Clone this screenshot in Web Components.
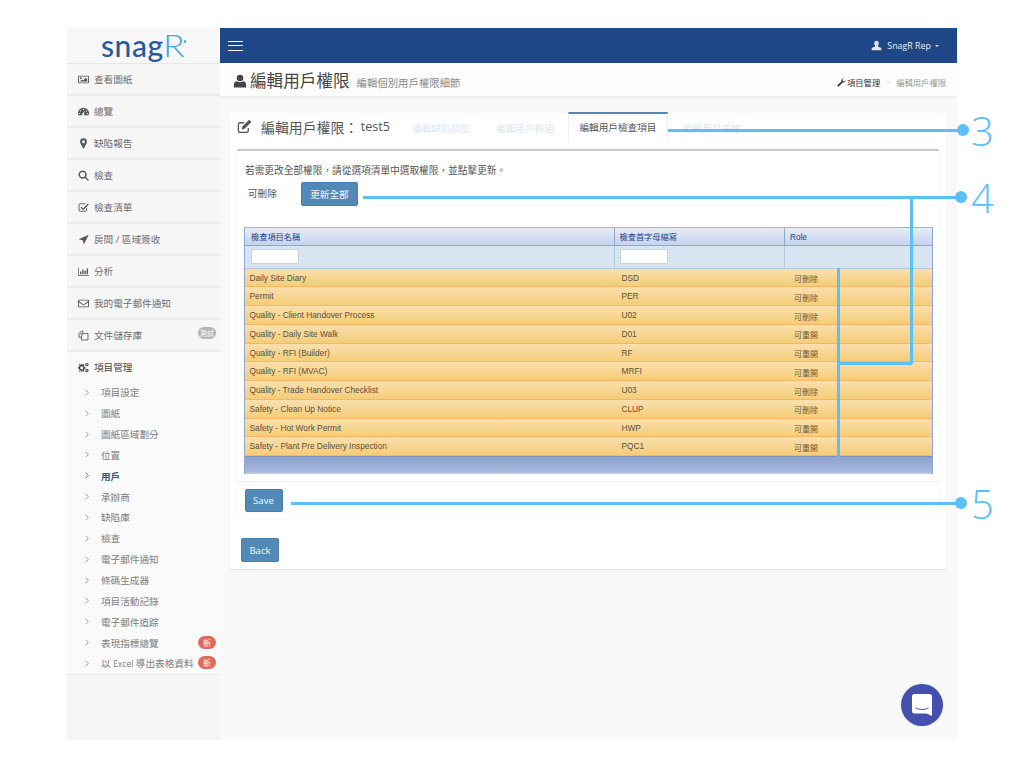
<!DOCTYPE html>
<html lang="zh-Hant">
<head>
<meta charset="utf-8">
<title>編輯用戶權限</title>
<style>
html,body{margin:0;padding:0;background:#fff}
body{font-family:"Open Sans","Noto Sans CJK TC",sans-serif;color:#555;padding:28px 0 0 67px;width:1024px;height:768px;box-sizing:border-box;overflow:hidden;position:relative}
</style>
</head>
<body>
<snag-app>
  <snag-sidebar slot="side">
    <nav-item icon="picture">查看圖紙</nav-item>
    <nav-item icon="gauge">總覽</nav-item>
    <nav-item icon="pin">缺陷報告</nav-item>
    <nav-item icon="search">檢查</nav-item>
    <nav-item icon="check">檢查清單</nav-item>
    <nav-item icon="arrow">房間 / 區域簽收</nav-item>
    <nav-item icon="chart">分析</nav-item>
    <nav-item icon="mail">我的電子郵件通知</nav-item>
    <nav-item icon="files" badge="測試" tone="gray">文件儲存庫</nav-item>
    <nav-group label="項目管理">
      <sub-item>項目設定</sub-item>
      <sub-item>圖紙</sub-item>
      <sub-item>圖紙區域劃分</sub-item>
      <sub-item>位置</sub-item>
      <sub-item active>用戶</sub-item>
      <sub-item>承辦商</sub-item>
      <sub-item>缺陷庫</sub-item>
      <sub-item>檢查</sub-item>
      <sub-item>電子郵件通知</sub-item>
      <sub-item>條碼生成器</sub-item>
      <sub-item>項目活動記錄</sub-item>
      <sub-item>電子郵件追踪</sub-item>
      <sub-item badge="新">表現指標總覽</sub-item>
      <sub-item badge="新">以 <span style="font-size:8.500px">Excel</span> 導出表格資料</sub-item>
    </nav-group>
  </snag-sidebar>
  <top-bar slot="main"></top-bar>
  <page-header slot="main"></page-header>
  <content-area slot="main">
    <perm-card>
      <check-row name="Daily Site Diary" code="DSD" role="可刪除"></check-row>
      <check-row name="Permit" code="PER" role="可刪除"></check-row>
      <check-row name="Quality - Client Handover Process" code="U02" role="可刪除"></check-row>
      <check-row name="Quality - Daily Site Walk" code="D01" role="可重開"></check-row>
      <check-row name="Quality - RFI (Builder)" code="RF" role="可重開"></check-row>
      <check-row name="Quality - RFI (MVAC)" code="MRFI" role="可重開"></check-row>
      <check-row name="Quality - Trade Handover Checklist" code="U03" role="可刪除"></check-row>
      <check-row name="Safety - Clean Up Notice" code="CLUP" role="可刪除"></check-row>
      <check-row name="Safety - Hot Work Permit" code="HWP" role="可重開"></check-row>
      <check-row name="Safety - Plant Pre Delivery Inspection" code="PQC1" role="可重開"></check-row>
    </perm-card>
  </content-area>
</snag-app>
<call-outs></call-outs>
<chat-launcher></chat-launcher>
<script>
const ICONS={
 picture:'<path fill-rule="evenodd" d="M1 2.5h14a1 1 0 0 1 1 1v9a1 1 0 0 1-1 1H1a1 1 0 0 1-1-1v-9a1 1 0 0 1 1-1zm.3 1.3v8.4h13.4V3.8z"/><circle cx="4.2" cy="6" r="1.4"/><path d="M2.7 11l3.2-3 1.6 1.4 3.6-3.9 2.3 2.5V11z"/>',
 gauge:'<path fill-rule="evenodd" d="M8 2.5a8 8 0 0 1 8 8c0 1.3-.3 2.3-.8 3H.8c-.5-.7-.8-1.700-.8-3a8 8 0 0 1 8-8zM8 4a1 1 0 1 0 0 2 1 1 0 0 0 0-2zM3.500 6a1 1 0 1 0 0 2 1 1 0 0 0 0-2zm9 0a1 1 0 1 0 0 2 1 1 0 0 0 0-2zM2.300 10a1 1 0 1 0 0 2 1 1 0 0 0 0-2zm11.400 0a1 1 0 1 0 0 2 1 1 0 0 0 0-2zM10 6.500l-2.700 3.700a1.600 1.600 0 1 0 1.500.6z"/>',
 pin:'<path fill-rule="evenodd" d="M8 .5a5 5 0 0 1 5 5c0 1.200-.4 2-.9 3L8.700 14.900a.8.8 0 0 1-1.400 0L3.900 8.500C3.400 7.500 3 6.700 3 5.500a5 5 0 0 1 5-5zm0 2.800a2.200 2.200 0 1 0 0 4.400 2.200 2.200 0 0 0 0-4.400z"/>',
 search:'<path fill-rule="evenodd" d="M6.700 .8a5.900 5.900 0 0 1 4.800 9.300l3.900 3.900a1 1 0 0 1-1.400 1.400l-3.900-3.900A5.900 5.900 0 1 1 6.700 .8zm0 2a3.900 3.900 0 1 0 0 7.800 3.900 3.900 0 0 0 0-7.800z"/>',
 check:'<path d="M12.500 8.800v3a1.700 1.700 0 0 1-1.700 1.700H3.200a1.700 1.700 0 0 1-1.700-1.700V4.200a1.700 1.700 0 0 1 1.700-1.700h7.300" fill="none" stroke="currentColor" stroke-width="1.300"/><path d="M4.800 6.800l2.600 2.500 7-7 1.300 1.300-8.300 8.300-3.900-3.800z"/>',
 arrow:'<path d="M15.500 1L8.500 15.200 7 9 .8 7.500z"/>',
 chart:'<path d="M0 2h1v11h15v1H0z"/><path d="M3 8h2v4H3zM6.200 5h2v7h-2zM9.400 7h2v5h-2zM12.600 3.500h2V12h-2z"/>',
 mail:'<path fill-rule="evenodd" d="M1.300 2.500h13.400A1.300 1.300 0 0 1 16 3.800v8.400a1.300 1.300 0 0 1-1.300 1.300H1.300A1.300 1.300 0 0 1 0 12.200V3.800a1.300 1.300 0 0 1 1.300-1.300zm0 1.200v.8L8 9.300l6.700-4.800v-.8zm0 2.300v6.300h13.400V6L8 10.800z"/>',
 files:'<path d="M7 1.500H5L1.500 5v5.500h3.300M7 1.500v4H3" fill="none" stroke="currentColor" stroke-width="1.300"/><path d="M10.800 5H8.500L5 8.500v6h9.500V5z" fill="none" stroke="currentColor" stroke-width="1.300"/>',
 cogs:'<circle cx="5.500" cy="8.500" r="3.400" fill="none" stroke="currentColor" stroke-width="2"/><path d="M4.700 3h1.600l.2 2H4.500zM4.700 14h1.600l.2-2H4.500zM0 7.700v1.600l2 .2V7.500zM11 7.700v1.600l-2 .2V7.500zM1.500 3.400l1.200-1 1.200 1.700-1.300 1zM9.500 13.600l-1.200 1-1.200-1.700 1.300-1zM1.500 13.600l1.200 1 1.200-1.700-1.300-1zM9.500 3.400l-1.200-1-1.200 1.700 1.300 1z"/><circle cx="13" cy="3.800" r="1.700" fill="none" stroke="currentColor" stroke-width="1.500"/><circle cx="13" cy="12.300" r="1.700" fill="none" stroke="currentColor" stroke-width="1.500"/>',
 user:'<circle cx="8" cy="4.600" r="3.800"/><path d="M1 15.500v-3.200c0-2.300 1.700-4 3.500-4 1 .8 2.200 1.200 3.500 1.200s2.500-.4 3.500-1.200c1.800 0 3.500 1.700 3.500 4v3.200z"/>',
 userthin:'<path d="M8 1c2 0 3.400 1.600 3.400 3.600 0 1.300-.5 2.500-1.300 3.300v1.500l4.900 2.400V15H1v-3.200l4.900-2.400V7.900C5.100 7.100 4.600 5.900 4.600 4.600 4.600 2.600 6 1 8 1z"/>',
 edit:'<path d="M12 9.500v3a1.800 1.800 0 0 1-1.800 1.800H3.300a1.800 1.800 0 0 1-1.800-1.800V5.800A1.800 1.800 0 0 1 3.300 4h4.400" fill="none" stroke="currentColor" stroke-width="1.400"/><path d="M13 .8l2.400 2.400-7.300 7.300-3 .6.600-3z"/>',
 wrench:'<path d="M15.700 3.800a4.300 4.300 0 0 1-5.700 4.100L4 14.400a1.800 1.800 0 0 1-2.600-2.500L8 6A4.300 4.300 0 0 1 12.300.3L9.800 2.800l.5 2.600 2.700.6z"/>'
};
const svg=(n,s)=>`<svg viewBox="0 0 16 16" width="${s}" height="${s}" fill="currentColor" aria-hidden="true">${ICONS[n]}</svg>`;
function def(tag,html){
  customElements.define(tag,class extends HTMLElement{
    constructor(){super();this.attachShadow({mode:'open'});}
    connectedCallback(){
      if(this._done)return;this._done=1;
      this.shadowRoot.innerHTML=typeof html==='function'?html(this):html;
    }
  });
}
const CJK='"Open Sans","Noto Sans CJK TC",sans-serif';

def('snag-app',`<style>
:host{display:grid;grid-template-columns:153px 737px;width:890px;height:712px;background:#f9f9f9;font-family:${CJK}}
.m{display:flex;flex-direction:column;min-width:0;height:712px}
</style><slot name="side"></slot><div class="m"><slot name="main"></slot></div>`);

def('snag-sidebar',`<style>
:host{display:flex;flex-direction:column;background:#f5f5f5;height:712px}
.logo{height:35px;border-bottom:1px solid #e6e6e6;display:flex;align-items:center;justify-content:center;background:#f7f7f7;font:500 30px/35px Lato,"Open Sans",sans-serif;letter-spacing:.6px;color:#2a5a9b}
.logo b{display:inline-block;font-weight:300;font-size:31px;color:#45a9df;letter-spacing:0;margin:0 3px 0 -1px;transform:scaleX(1.15);transform-origin:left center}
.logo i{display:inline-block;width:2.500px;height:2.500px;border-radius:50%;background:#45a9df;margin:0 0 8px -1px}
</style><div class="logo"><span>snag</span><b>R</b><i></i></div><slot></slot>`);

def('nav-item',h=>`<style>
:host{display:flex;align-items:center;height:30px;border-bottom:2px solid #ebebeb;padding-left:11px;font-size:9.650px;color:#6e6e6e;position:relative;background:#f6f6f6}
.i{width:11px;height:11px;display:flex;align-items:center;justify-content:center;margin-right:5px;color:#555;flex:none}
.b{position:absolute;right:4px;top:7px;height:12px;width:18px;border-radius:7px;background:#b3b3b3;color:#fff;font-size:7.200px;line-height:12px;text-align:center}
</style><span class="i">${svg(h.getAttribute('icon'),11)}</span><slot></slot>${h.getAttribute('badge')?`<span class="b">${h.getAttribute('badge')}</span>`:''}`);

def('nav-group',h=>`<style>
:host{display:block;background:#fafafa;border-bottom:1px solid #e8e8e8}
.h{height:30px;box-sizing:border-box;padding:0 0 0 11px;display:flex;align-items:center;font-size:9.650px;color:#444}
.i{width:11px;height:11px;display:flex;margin-right:5px;color:#444}
</style><div class="h"><span class="i">${svg('cogs',11)}</span>${h.getAttribute('label')}</div><slot></slot>`);

def('sub-item',h=>{const a=h.hasAttribute('active');return `<style>
:host{display:flex;align-items:center;height:20.850px;padding-left:18px;font-size:9.650px;color:${a?'#2a5a9b':'#808080'};font-weight:${a?700:400};position:relative;white-space:pre}
svg{flex:none;width:4px;height:7px;margin-right:12px}
.b{position:absolute;right:4px;top:3.500px;height:13px;width:18px;border-radius:7px;background:#e2695a;color:#fff;font-size:8px;line-height:13px;text-align:center}
</style><svg viewBox="0 0 4 7"><path d="M.5 .7L3.300 3.500.5 6.300" fill="none" stroke="${a?'#2a5a9b':'#888'}" stroke-width=".8"/></svg><span><slot></slot></span>${h.getAttribute('badge')?`<span class="b">${h.getAttribute('badge')}</span>`:''}`});

def('top-bar',`<style>
:host{display:flex;align-items:center;height:35px;background:#1f4788;color:#e8edf5;padding:0 18px 0 8px;flex:none;font-size:8.900px}
.b{width:15px;height:10px;border-top:1.500px solid #fff;border-bottom:1.500px solid #fff;position:relative;box-sizing:border-box;margin-top:1px}
.b:after{content:"";position:absolute;left:0;right:0;top:2.750px;height:1.500px;background:#fff}
.sp{flex:1}.u{display:flex;color:#dfe6f2;margin-right:5px}
.c{width:0;height:0;border:2.500px solid transparent;border-top-color:#dfe6f2;border-bottom:0;margin-left:4px}
</style><div class="b"></div><div class="sp"></div><span class="u">${svg('userthin',11)}</span><span>SnagR Rep</span><span class="c"></span>`);

def('page-header',`<style>
:host{display:flex;align-items:center;height:33px;box-sizing:content-box;background:#fdfdfd;border-bottom:2px solid #eeeeee;padding:0 11px 0 13px;flex:none;color:#555}
.i{display:flex;color:#444;margin:3px 3px 0 0}
h1{margin:4px 0 0;font-size:16.600px;font-weight:400;color:#444;line-height:1}
small{font-size:10.400px;color:#8a8a8a;margin-left:7px;margin-top:6px}
.sp{flex:1}
.bc{display:flex;align-items:center;font-size:8.300px;color:#999;margin-top:5px}
.bc b{font-weight:400;color:#333;margin-left:1px}.bc i{font-style:normal;margin:0 6px;color:#ccc;font-size:7px}
.w{display:flex;color:#333}
</style><span class="i">${svg('user',14)}</span><h1>編輯用戶權限</h1><small>編輯個別用戶權限細節</small><span class="sp"></span>
<span class="bc"><span class="w">${svg('wrench',9)}</span><b>項目管理</b><i>&gt;</i><span>編輯用戶權限</span></span>`);

def('content-area',`<style>
:host{display:block;flex:1;background:#f9f9f9;padding:15px 11px 0 10px}
</style><slot></slot>`);

def('action-btn',`<style>
:host{display:flex;align-items:center;justify-content:center;background:#5189b7;border:1px solid #4a7fad;border-radius:2px;color:#f3f7fb;font-size:9.650px;box-sizing:border-box;height:var(--h,23px);width:var(--w,auto)}
</style><slot></slot>`);

def('perm-card',`<style>
:host{display:block;height:456px;background:#fff;box-shadow:0 1px 1px #e6e6e6;box-sizing:border-box;color:#555}
.head{display:flex;height:29px;align-items:stretch}
.title{display:flex;align-items:center;width:170px;padding:0 0 2px 7px;box-sizing:border-box;font-size:13.900px;color:#555;white-space:pre}
.title .i{display:flex;margin-right:9px;color:#555}
.title em{font-style:normal;font-size:12.500px;margin-left:-1px}
.tab{display:flex;align-items:center;justify-content:center;width:82px;margin-right:2px;font-size:9.650px;color:#dde8f3;box-sizing:border-box}
.tab.on{width:100px;border-top:2px solid #4f87b5;border-left:1px solid #f0f0f0;border-right:1px solid #f0f0f0;color:#555;height:31px;margin-top:-1px;background:#fff;padding-bottom:4px}
.tab.l{justify-content:flex-start;padding-left:13px;width:90px}
.panel{margin:7px 7px 0;height:370px;border-top:2px solid #c8c8c8;border-radius:2px;box-shadow:0 0 2px #e4e4e4;box-sizing:border-box;padding:0 7px;display:flex;flex-direction:column}
.hint{font-size:9.680px;line-height:13px;margin:12.500px 0 0 1px;white-space:nowrap;color:#555}
.upd{display:flex;align-items:center;margin-top:5.500px;height:24px;padding-left:4px}
.upd span{width:53px;font-size:9.650px;margin-top:-3px}
.sep{display:flex;margin:7px -7px 0;border-top:1px solid #f0f0f0;padding:7px 0 0 7.500px}
.back{display:flex;padding:19px 0 0 11px}
</style>
<div class="head">
 <div class="title"><span class="i">${svg('edit',15)}</span>編輯用戶權限： <em>test5</em></div>
 <div class="tab">編輯缺陷類型</div><div class="tab">編輯用戶群組</div><div class="tab on">編輯用戶檢查項目</div><div class="tab l">編輯用戶表格</div>
</div>
<div class="panel">
 <div class="hint">若需更改全部權限，請從選項清單中選取權限，並點擊更新。</div>
 <div class="upd"><span>可刪除</span><action-btn style="--w:57px;--h:24px">更新全部</action-btn></div>
 <check-table style="margin-top:21px"><slot></slot></check-table>
 <div class="sep"><action-btn style="--w:38px">Save</action-btn></div>
</div>
<div class="back"><action-btn style="--w:38px;--h:24px">Back</action-btn></div>`);

const COLS='grid-template-columns:370px 170px 1fr;';
def('check-table',`<style>
:host{display:block;border:1px solid #8fa6d3;border-bottom:0;border-top-color:#a0b4da;font-family:"Liberation Sans",Arial,"Noto Sans CJK TC",sans-serif;box-sizing:border-box;width:689px}
.r{display:grid;${COLS}}
.hd{height:17px;background:linear-gradient(#e6edf8,#c5d3eb);border-bottom:1px solid #8fa6d3;color:#15428b;font-size:8.200px;line-height:19px}
.hd div{padding-left:6px;border-right:1px solid #8fa6d3}.hd div:nth-child(2){padding-left:4.500px}.hd div:last-child{border:0;padding-left:5px}
.ft{height:22.500px;background:#d9e4f2;border-bottom:1px solid #b4c5de;box-sizing:border-box}
.ft div{border-right:1px solid #b7c7e0;padding:2.500px 0 0 6px}.ft div:nth-child(2){padding-left:4.500px}.ft div:last-child{border:0}
input{display:block;width:48px;height:15px;box-sizing:border-box;border:1px solid #c8d4e6;background:#fff;padding:0;margin:0;border-radius:1px}
.foot{height:18px;background:linear-gradient(#8ea4cf,#a6b8db 85%,#c6d1e6);border-top:1px solid #7b93c3;box-sizing:border-box}
</style>
<div class="r hd"><div>檢查項目名稱</div><div>檢查首字母縮寫</div><div>Role</div></div>
<div class="r ft"><div><input aria-label="檢查項目名稱"></div><div><input aria-label="檢查首字母縮寫"></div><div></div></div>
<slot></slot><div class="foot"></div>`);

def('check-row',h=>`<style>
:host{display:grid;${COLS}height:18.780px;box-sizing:border-box;background:linear-gradient(#fadfae,#f5cd78);border-bottom:1px solid #f3b865;color:#5a5040;font-size:8.300px;line-height:18px;font-family:"Liberation Sans",Arial,sans-serif}
div{padding-left:6.500px;white-space:nowrap}
div:nth-child(2){padding-left:4.500px}
.ro{font-family:"Noto Sans CJK TC",sans-serif;font-size:8px;padding-left:9px;padding-top:1.500px;color:#6f5a38}
</style><div>${h.getAttribute('name')}</div><div>${h.getAttribute('code')}</div><div class="ro">${h.getAttribute('role')}</div>`);

def('call-outs',`<style>
:host{position:absolute;left:0;top:0;width:1024px;height:768px;pointer-events:none;color:#5bc0f8}
.l{position:absolute;background:#5bc0f8}
.d{position:absolute;width:12px;height:12px;border-radius:50%;background:#5bc0f8}
.n{position:absolute;font:300 40px/40px "Open Sans",sans-serif;color:#5bc0f8}
</style>
<div class="l" style="left:668px;top:129px;width:295px;height:3px"></div><div class="d" style="left:957px;top:124px"></div><div class="n" style="left:971px;top:111px">3</div>
<div class="l" style="left:363px;top:195.500px;width:598px;height:3px"></div><div class="d" style="left:955px;top:191px"></div><div class="n" style="left:971px;top:178px">4</div>
<div class="l" style="left:909.500px;top:196px;width:3px;height:168px"></div>
<div class="l" style="left:838px;top:362px;width:74px;height:3px"></div>
<div class="l" style="left:837px;top:268px;width:3px;height:189px"></div>
<div class="l" style="left:291px;top:502px;width:670px;height:3px"></div><div class="d" style="left:955px;top:497px"></div><div class="n" style="left:971px;top:484px">5</div>`);

def('chat-launcher',`<style>
:host{position:absolute;left:901px;top:684px;width:42px;height:42px;border-radius:50%;background:#4350ae;display:flex;align-items:center;justify-content:center;box-shadow:0 0 2px rgba(0,0,0,.15)}
</style><svg viewBox="0 0 20 22" width="20" height="22"><path d="M2.500 0h15A2.500 2.500 0 0 1 20 2.500V22l-5.500-2.500h-12A2.500 2.500 0 0 1 0 17V2.500A2.500 2.500 0 0 1 2.500 0z" fill="#fff"/><path d="M3.500 14c4 2 9 2 13 0" fill="none" stroke="#4350ae" stroke-width="1"/></svg>`);
</script>
</body>
</html>
